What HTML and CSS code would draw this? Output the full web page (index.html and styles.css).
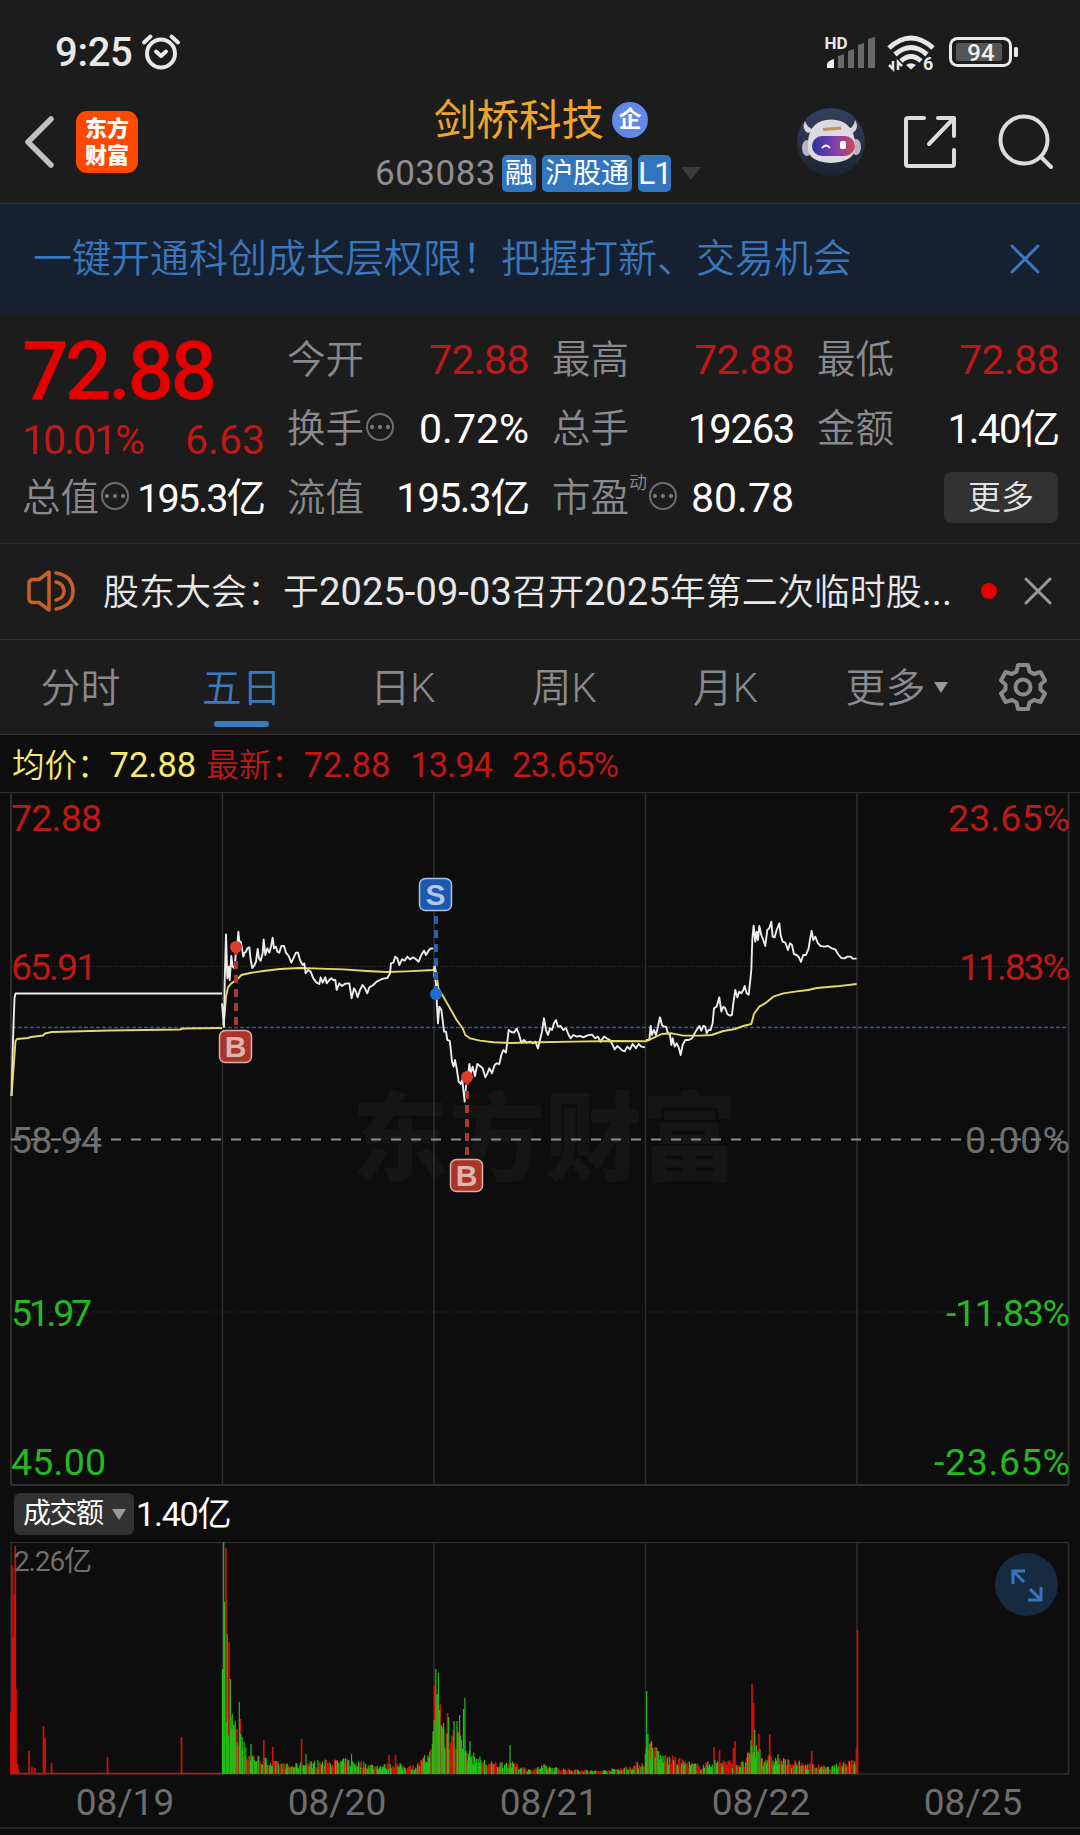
FILE: index.html
```
<!DOCTYPE html>
<html lang="zh-CN">
<head>
  <meta charset="UTF-8">
  <meta name="viewport" content="width=device-width, initial-scale=1.0">
  <title>剑桥科技 603083</title>
  <link rel="stylesheet" href="styles.css">
</head>
<body>
  <!-- 状态栏 -->
  <div class="status-bar">
    <span class="time">9:25</span>
    <svg class="alarm" width="40" height="38" viewBox="0 0 40 38" fill="none" stroke="#e8e8e8" stroke-linecap="round">
      <circle cx="20" cy="20.500" r="14" stroke-width="4"/>
      <path d="M3 9.500 9.500 3.500M37 9.500 30.500 3.500" stroke-width="4"/>
      <path d="M15 18.500 20 23 25 18.500" stroke-width="4" stroke-linejoin="round"/>
    </svg>
    <svg class="status-icons" width="200" height="44" viewBox="820 30 200 44">
      <text x="824.500" y="49" class="hd">HD</text>
      <path d="M827 68v-4q1-3 7-5v9z" fill="#f0f0f0"/>
      <path d="M838 68V56l6-2v14zM848 68V51l6-2v19zM858 68V45l6-2v25zM868 68V39l7-2v31z" fill="#6a6a6a"/>
      <g fill="none" stroke="#e8e8e8" stroke-width="5">
        <path d="M889 48q22-20 44 0"/>
        <path d="M895 54.500q16-14 32 0"/>
        <path d="M901 61q10-9 20 0"/>
      </g>
      <path d="M906 65q5-3.500 10 0l-5 4.500z" fill="#e8e8e8"/>
      <path d="M893 61v8l-4-4M898 70v-8l4 4" fill="none" stroke="#e8e8e8" stroke-width="2.500"/>
      <text x="923" y="70" class="wifi-gen">6</text>
      <rect x="950.500" y="38.500" width="60" height="27" rx="7" fill="none" stroke="#e8e8e8" stroke-width="3"/>
      <rect x="956" y="43" width="46" height="18" rx="2" fill="#555"/>
      <rect x="1014" y="47" width="4" height="10" rx="1.500" fill="#e8e8e8"/>
      <text x="981" y="61" class="battery">94</text>
    </svg>
  </div>

  <!-- 标题栏 -->
  <header class="header">
    <svg class="back" width="32" height="54" viewBox="0 0 32 54" fill="none" stroke="#c0c0c0" stroke-width="5.500" stroke-linecap="round" stroke-linejoin="round">
      <path d="M27 4 4 27 27 50"/>
    </svg>
    <div class="logo">东方<br>财富</div>
    <div class="stock">
      <div class="stock-name">剑桥科技<span class="corp">企</span></div>
      <div class="stock-code">
        <span>603083</span>
        <b class="tag">融</b><b class="tag">沪股通</b><b class="tag tag-l1">L1</b>
        <i class="arrow-down"></i>
      </div>
    </div>
    <svg class="robot" width="68" height="68" viewBox="0 0 68 68">
      <defs>
        <linearGradient id="visor" x1="0" x2="1">
          <stop offset="0" stop-color="#2b3596"/>
          <stop offset=".5" stop-color="#7a3fae"/>
          <stop offset="1" stop-color="#d04a58"/>
        </linearGradient>
        <linearGradient id="night" x1="0" y1="0" x2="0" y2="1">
          <stop offset="0" stop-color="#33405f"/>
          <stop offset="1" stop-color="#1c2330"/>
        </linearGradient>
      </defs>
      <circle cx="34" cy="34" r="34" fill="url(#night)"/>
      <path d="M8 13q-4 8 3 12l7-3q-8-2-10-9zM58 12q5 8-2 13l-7-3q8-2 9-10z" fill="#d9d5dc"/>
      <ellipse cx="10" cy="40" rx="5" ry="8" fill="#b9b4c3"/>
      <ellipse cx="59" cy="39" rx="5" ry="8" fill="#b9b4c3"/>
      <path d="M11 33Q13 12 34 11.500 55 12 58 33v8q-2 13-24 14-22-1-23-14z" fill="#dcd9df"/>
      <path d="M26 21.500 44 20" stroke="#c98c61" stroke-width="3"/>
      <rect x="15" y="28" width="43" height="20" rx="10" fill="url(#visor)"/>
      <path d="M25 40q4-5 8 0" fill="none" stroke="#fff" stroke-width="2"/>
      <rect x="43" y="33" width="6" height="8" rx="2" fill="#fff"/>
    </svg>
    <svg class="share" width="56" height="56" viewBox="0 0 56 56" fill="none" stroke="#dcdcdc" stroke-width="4" stroke-linejoin="round" stroke-linecap="round">
      <path d="M22 4H6q-2 0-2 2v44q0 2 2 2h44q2 0 2-2V36M36 4h16v18M52 4 27 30"/>
    </svg>
    <svg class="search" width="56" height="56" viewBox="0 0 56 56" fill="none" stroke="#dcdcdc" stroke-width="4" stroke-linecap="round">
      <circle cx="26" cy="26" r="23.500"/>
      <path d="M43 43 53 53"/>
    </svg>
  </header>

  <!-- 广告条 -->
  <div class="banner">
    <span>一键开通科创成长层权限！把握打新、交易机会</span>
    <svg width="30" height="30" viewBox="0 0 30 30" stroke="#3b7ac2" stroke-width="3" stroke-linecap="round">
      <path d="M2 2 28 28M28 2 2 28"/>
    </svg>
  </div>

  <!-- 行情 -->
  <section class="quote">
    <div class="quote-col">
      <div class="price">72.88</div>
      <div class="change"><span class="pct">10.01%</span><span>6.63</span></div>
      <div class="item"><label>总值</label><i class="info"></i><span class="val tighter">195.3亿</span></div>
    </div>
    <div class="quote-col">
      <div class="item"><label>今开</label><span class="val up">72.88</span></div>
      <div class="item"><label>换手</label><i class="info"></i><span class="val">0.72%</span></div>
      <div class="item"><label>流值</label><span class="val tight">195.3亿</span></div>
    </div>
    <div class="quote-col">
      <div class="item"><label>最高</label><span class="val up">72.88</span></div>
      <div class="item"><label>总手</label><span class="val tight">19263</span></div>
      <div class="item"><label>市盈<sup>动</sup></label><i class="info"></i><span class="val">80.78</span></div>
    </div>
    <div class="quote-col">
      <div class="item"><label>最低</label><span class="val up">72.88</span></div>
      <div class="item"><label>金额</label><span class="val tight">1.40亿</span></div>
      <div class="item"><button class="more-btn">更多</button></div>
    </div>
  </section>

  <!-- 公告 -->
  <div class="notice">
    <svg class="speaker" width="48" height="42" viewBox="0 0 48 42" fill="none" stroke="#c95f27" stroke-width="3.500" stroke-linejoin="round" stroke-linecap="round">
      <path d="M22 2v38l-10-7.500H5q-3-1-3-4v-15q0-3 3-4h7z"/>
      <path d="M29 12q8 2 8 9t-8 9M29 3q17 3 17 18T29 39"/>
    </svg>
    <span class="notice-text">股东大会：于<em>2025-09-03</em>召开<em>2025</em>年第二次临时股<em>...</em></span>
    <i class="dot"></i>
    <svg class="close" width="28" height="28" viewBox="0 0 28 28" stroke="#9a9a9a" stroke-width="3" stroke-linecap="round">
      <path d="M2 2 26 26M26 2 2 26"/>
    </svg>
  </div>

  <!-- 周期切换 -->
  <nav class="tabs">
    <a>分时</a>
    <a class="active">五日</a>
    <a>日K</a>
    <a>周K</a>
    <a>月K</a>
    <a class="tab-more">更多<i></i></a>
    <svg class="gear" width="50" height="50" viewBox="-25 -25 50 50" fill="none" stroke="#8a8a8e" stroke-width="4" stroke-linejoin="round">
      <path d="M-5-22H5L6.500-15.500 11-13 17.500-15 22-6.500 17.500-2.500V2.500L22 6.500 17.500 15 11 13 6.500 15.500 5 22H-5L-6.500 15.500-11 13-17.500 15-22 6.500-17.500 2.500V-2.500L-22-6.500-17.500-15-11-13-6.500-15.500Z"/>
      <circle r="7.500"/>
    </svg>
  </nav>

  <div class="legend">
    <span class="avg">均价：<em>72.88</em></span>
    <span class="last">最新：<em>72.88</em><em>13.94</em><em>23.65%</em></span>
  </div>

  <!-- 五日分时图 -->
  <svg class="chart" width="1080" height="694" viewBox="0 792 1080 694">
    <text x="352" y="1173" class="watermark">东方财富</text>
    <g stroke="#2e2e2e" stroke-width="2">
      <path d="M0 792.500H1080" stroke-width="1.500"/>
      <path d="M11 793V1485M1068.500 793V1485M10 1485H1069"/>
      <path d="M222.500 793V1485M434 793V1485M645.500 793V1485M857 793V1485" stroke-width="1.500"/>
    </g>
    <path d="M12 966.500H1068M12 1312H1068" stroke="#333" stroke-dasharray="1 2"/>
    <path d="M11 1139.500H1068" stroke="#8e8e8e" stroke-width="2" stroke-dasharray="10 10"/>
    <path d="M12 1027.500H1068" stroke="#33588a" stroke-width="1.500" stroke-dasharray="4 2"/>

    <g class="axis">
      <text x="11" y="831" textLength="91" class="r">72.88</text>
      <text x="11" y="980" textLength="86" class="r">65.91</text>
      <text x="11" y="1153" textLength="91">58.94</text>
      <text x="11" y="1326" textLength="81" class="g">51.97</text>
      <text x="11" y="1475" textLength="95" class="g">45.00</text>
    </g>
    <g class="axis" text-anchor="end">
      <text x="1070" y="831" textLength="122" class="r">23.65%</text>
      <text x="1070" y="980" textLength="111" class="r">11.83%</text>
      <text x="1070" y="1153" textLength="105">0.00%</text>
      <text x="1070" y="1326" textLength="124" class="g">-11.83%</text>
      <text x="1070" y="1475" textLength="136" class="g">-23.65%</text>
    </g>

    <!-- 08/19 -->
    <path class="line-price" d="M11.500 1096 13 1040 14.500 998 15.500 993.500H222"/>
    <path class="line-avg" d="M11.500 1096 14 1062 15.500 1041 17 1039 28 1038 31 1037 43 1035.500 45 1033.500 52 1032 110 1030.500 180 1029.500 183 1028.500 222 1028"/>
    <!-- 08/20 -->
    <g transform="translate(200 900) scale(.3333)">
      <polyline class="line-avg" points="70,375 74,340 78,290 84,262 92,252 104,243 112,238 124,225 150,219 190,213 240,207 300,204 360,206 430,208 500,213 560,216 620,214 700,210 705,195"/>
      <polyline class="line-price" points="66,310 72,380 74,250 78,103 82,235 86,200 89,240 94,168 98,200 104,205 108,150 112,140 115,95 118,125 122,125 126,145 130,170 134,158 138,155 142,145 148,142 152,180 157,204 162,198 168,185 173,147 177,175 182,182 188,160 191,118 196,165 202,145 208,158 213,140 218,113 222,145 228,140 232,155 238,158 244,138 252,138 258,158 266,168 274,188 280,175 288,158 294,158 300,180 308,195 313,190 317,220 324,210 332,215 340,235 350,248 358,252 362,232 368,248 376,232 380,250 388,240 394,235 400,240 406,240 410,270 418,250 426,258 434,252 442,250 448,250 455,295 462,265 468,275 473,292 480,270 488,255 495,265 502,280 508,262 520,255 530,245 540,240 550,236 562,234 570,220 573,190 580,188 586,170 592,175 598,195 606,178 614,182 622,170 630,178 640,172 648,178 656,185 664,165 672,152 678,165 684,155 690,146 700,145"/>
    </g>
    <!-- 08/21, 08/22 -->
    <g transform="translate(400 860) scale(.3333)">
      <polyline class="line-price" points="105,315 103,345 108,370 111,440 114,490 118,440 124,450 128,480 132,515 138,515 142,540 149,543 152,565 156,605 161,620 165,600 170,625 176,665 182,672 187,660 190,690 194,725 198,680 201,655 205,640 208,612 212,640 218,620 225,648 232,612 240,618 248,625 256,652 262,640 268,625 276,640 284,615 290,610 298,612 304,585 310,570 318,578 322,545 326,510 334,516 342,518 350,506 356,520 364,548 372,540 380,548 390,545 400,550 406,545 414,565 420,540 426,515 432,475 438,510 444,525 450,505 456,510 462,490 468,480 474,500 482,498 490,510 498,505 506,525 512,535 520,525 530,530 540,528 550,532 562,526 576,524 586,535 594,530 602,545 612,530 620,535 630,540 638,555 644,568 652,558 660,565 668,572 674,574 682,560 690,568 698,552 708,565 716,552 724,560 735,562"/>
      <polyline class="line-price" points="738,540 748,540 752,498 756,525 762,510 768,525 774,500 780,472 786,495 792,500 798,500 804,520 810,525 814,555 818,535 824,560 830,550 836,562 842,585 848,555 856,540 866,540 876,535 884,520 890,510 898,498 904,512 910,498 916,500 920,520 926,510 932,510 938,490 942,445 950,440 958,412 964,455 970,440 976,445 982,462 990,467 996,465 1000,430 1006,390 1012,412 1018,395 1024,400 1030,390 1034,378 1040,400 1046,404 1050,370 1054,330 1057,240 1061,197 1066,245 1070,215 1074,240 1078,198 1084,225 1090,240 1096,258 1102,210 1108,205 1114,185 1118,230 1124,232 1130,210 1138,190 1142,225 1148,245 1156,248 1164,270 1170,250 1176,255 1182,282 1190,285 1196,290 1203,306 1210,285 1218,285 1226,265 1230,240 1235,212 1240,240 1246,230 1254,250 1262,258 1272,260 1284,258 1296,265 1306,268 1314,282 1324,294 1334,295 1342,290 1352,290 1358,296 1370,296"/>
      <polyline class="line-avg" points="106,325 110,345 115,385 130,410 150,445 170,480 188,505 196,525 210,535 240,542 280,547 330,549 420,547 520,545 640,543 738,544"/>
      <polyline class="line-avg" points="738,544 760,534 785,522 815,520 850,527 900,527 935,525 970,513 1005,507 1030,498 1054,492 1062,462 1078,440 1100,427 1120,410 1150,400 1190,394 1225,390 1250,384 1310,379 1370,372"/>
    </g>

    <!-- 买卖点 -->
    <g class="mark buy">
      <path d="M236 1025V950"/>
      <circle cx="236" cy="947" r="6"/>
      <rect x="219.500" y="1030.500" width="32" height="32" rx="6"/>
      <text x="235.500" y="1057">B</text>
    </g>
    <g class="mark buy">
      <path d="M467 1155V1079"/>
      <circle cx="467" cy="1077" r="6"/>
      <rect x="450.500" y="1159.500" width="32" height="32" rx="6"/>
      <text x="466.500" y="1186">B</text>
    </g>
    <g class="mark sell">
      <path d="M436 916V992"/>
      <circle cx="436" cy="994" r="6"/>
      <rect x="419.500" y="878.500" width="32" height="32" rx="6"/>
      <text x="435.500" y="905">S</text>
    </g>
  </svg>

  <div class="vol-head">
    <button class="vol-btn">成交额<i></i></button>
    <span>1.40亿</span>
  </div>

  <!-- 成交额 -->
  <svg class="volume" width="1080" height="233" viewBox="0 1542 1080 233">
    <path d="M10 1542.500H1069M11 1543V1774M1068.500 1543V1774M10 1774H1069M222.500 1543V1774M434 1543V1774M645.500 1543V1774M857 1543V1774" stroke="#2e2e2e" stroke-width="1.500"/>
    <path id="bars-red" stroke="#d20f0a" stroke-width="1.700"/>
    <path id="bars-green" stroke="#22bd18" stroke-width="1.200"/>
    <text x="14" y="1571" textLength="78" class="vol-max">2.26亿</text>
    <circle cx="1026.500" cy="1584.500" r="31.500" fill="#172a40"/>
    <path d="M1013 1584V1571H1025M1013 1571 1024 1582M1041 1587V1600H1028M1041 1600 1030 1589" fill="none" stroke="#3776be" stroke-width="3"/>
  </svg>

  <div class="dates">
    <span>08/19</span><span>08/20</span><span>08/21</span><span>08/22</span><span>08/25</span>
  </div>

  <script>
    const BASE = 1774;
    const red = [], green = [];

    function bar(list, x, h) {
      list.push('M' + x.toFixed(1) + ' ' + BASE + 'v-' + h.toFixed(1));
    }

    // 单独的高柱: [x, 高度, 颜色]
    const spikes = [
      [11, 62, 'r'], [12, 209, 'r'], [13, 136, 'r'], [14.2, 179, 'r'], [15.3, 228, 'r'], [16, 85, 'r'], [17.5, 10, 'r'], [18.5, 5, 'r'],
      [29, 23, 'r'], [32, 7, 'r'], [35, 6, 'r'], [43.5, 48, 'r'], [45, 36, 'r'], [51.5, 11, 'r'], [107.5, 17, 'r'], [181.5, 37, 'r'],
      [222.5, 105, 'g'], [223.7, 232, 'g'], [224.7, 172, 'g'], [226, 226, 'r'], [227.2, 140, 'g'], [229, 132, 'r'], [230.3, 95, 'g'],
      [232.3, 60, 'g'], [235, 50, 'g'], [237, 45, 'r'], [239.3, 72, 'g'], [240.5, 55, 'r'], [242.2, 37, 'g'], [244.2, 32, 'g'],
      [251, 30, 'g'], [263.8, 34, 'r'], [272.8, 27, 'r'], [301.6, 35, 'r'], [306, 20, 'g'], [351.5, 20, 'g'], [389, 19, 'r'], [395.5, 19, 'r'],
      [431, 25, 'r'], [433, 42, 'g'], [434.5, 88, 'r'], [435.8, 105, 'g'], [438.5, 101, 'g'], [437.2, 80, 'g'], [440.3, 70, 'r'], [443.5, 51, 'g'],
      [447.5, 61, 'r'], [448.7, 57, 'g'], [454, 53, 'g'], [457, 53, 'g'], [459.6, 59, 'g'], [463.5, 65, 'g'], [464.9, 76, 'g'],
      [470, 33, 'g'], [510, 29, 'g'],
      [646.7, 83, 'g'], [648, 40, 'g'], [650, 31, 'r'], [651.5, 33, 'g'], [656, 27, 'g'],
      [714, 27, 'r'], [719.5, 24, 'r'], [735, 33, 'r'], [733.5, 26, 'r'], [752, 90, 'r'], [753.6, 71, 'r'], [754.7, 44, 'g'],
      [756.5, 29, 'g'], [759, 40, 'r'], [760, 25, 'g'], [769.7, 40, 'r'], [778, 20, 'g'], [811.7, 23, 'r'], [856.5, 25, 'r'], [857.5, 144, 'r']
    ];

    // 普通柱的包络线: [x, 平均高度]
    const envelope = [
      [223, 60], [230, 55], [240, 36], [246, 22], [258, 16], [275, 11], [290, 8], [310, 11], [350, 13], [375, 8], [395, 9], [415, 7],
      [432, 22], [436, 70], [445, 42], [462, 36], [468, 20], [490, 10], [510, 11], [530, 4], [545, 8], [560, 5], [600, 3], [630, 7],
      [644, 12], [648, 32], [660, 18], [680, 13], [700, 8], [718, 13], [745, 10], [752, 30], [762, 17], [790, 12], [830, 6], [857, 16]
    ];

    let seed = 7;
    function rnd() {
      seed = (seed * 16807) % 2147483647;
      return seed / 2147483647;
    }

    let k = 0;
    for (let x = 223; x < 857; x += 0.88) {
      while (k < envelope.length - 2 && envelope[k + 1][0] < x) k++;
      const [x0, h0] = envelope[k], [x1, h1] = envelope[k + 1];
      const h = h0 + (h1 - h0) * (x - x0) / (x1 - x0);
      bar(rnd() > 0.54 ? green : red, x, h * (0.5 + rnd() * 0.75));
    }
    spikes.forEach(([x, h, c]) => bar(c === 'r' ? red : green, x, h));
    red.push('M10 1773.5H222');

    document.getElementById('bars-red').setAttribute('d', red.join(''));
    document.getElementById('bars-green').setAttribute('d', green.join(''));
  </script>
</body>
</html>
```
FILE: styles.css
```
* {
  box-sizing: border-box;
}
body {
  margin: 0;
  width: 1080px;
  height: 1835px;
  overflow: hidden;
  background: #1c1c1c;
  color: #fff;
  font-family: Roboto, "Noto Sans CJK SC", sans-serif;
  font-weight: 350;
  line-height: 1.2;
}
svg {
  display: block;
  flex: none;
}
i, em {
  font-style: normal;
}
button {
  border: none;
  padding: 0;
  color: #e4e4e4;
  font: inherit;
}

/* 状态栏 */
.status-bar {
  display: flex;
  align-items: flex-start;
  height: 96px;
  padding: 30px 60px 0 55px;
}
.time {
  width: 78px;
  font-size: 40px;
  line-height: 46px;
  font-weight: 500;
  letter-spacing: -.3px;
  color: #e8e8e8;
}
.alarm {
  margin-left: 8px;
  margin-top: 3px;
}
.status-icons {
  margin-left: auto;
}
.hd {
  font-size: 17px;
  font-weight: 700;
  fill: #e8e8e8;
}
.wifi-gen {
  font-size: 18px;
  font-weight: 700;
  fill: #e8e8e8;
}
.battery {
  font-size: 24px;
  font-weight: 500;
  text-anchor: middle;
  fill: #f0f0f0;
}

/* 标题栏 */
.header {
  display: flex;
  align-items: center;
  height: 108px;
  padding: 0 26px 16px 24px;
  border-bottom: 1px solid #333;
}
.logo {
  width: 62px;
  height: 62px;
  margin-left: 20px;
  padding-top: 4px;
  border-radius: 11px;
  background: #ff4800;
  font-size: 22px;
  line-height: 27px;
  font-weight: 900;
  text-align: center;
}
.stock {
  width: 330px;
  margin-left: 238px;
  padding-top: 6px;
}
.stock-name {
  display: flex;
  align-items: center;
  height: 46px;
  padding-left: 58px;
  font-size: 42.500px;
  font-weight: 400;
  color: #eda62b;
}
.corp {
  width: 36px;
  height: 36px;
  margin-left: 8px;
  border-radius: 50%;
  background: #6289e6;
  color: #fff;
  font-size: 23px;
  line-height: 36px;
  font-weight: 700;
  text-align: center;
}
.stock-code {
  display: flex;
  align-items: center;
  height: 37px;
  margin-top: 12px;
  font-size: 35px;
  color: #8e8e93;
}
.stock-code span {
  width: 127px;
  margin-left: -1px;
  font-weight: 400;
  letter-spacing: .5px;
}
.tag {
  height: 37px;
  padding: 0 3px;
  margin-right: 6px;
  border-radius: 5px;
  background: #3174bf;
  color: #fff;
  font-size: 28px;
  line-height: 37px;
  font-weight: 400;
}
.tag-l1 {
  font-size: 32px;
  padding: 0;
  width: 33px;
  letter-spacing: -1px;
  text-align: center;
}
.arrow-down {
  border: 10px solid transparent;
  border-top: 13px solid #3a3a3a;
  border-bottom: 0;
  margin-left: 4px;
}
.robot {
  margin-left: auto;
}
.share {
  margin-left: 37px;
}
.search {
  margin-left: 40px;
}

/* 广告条 */
.banner {
  display: flex;
  align-items: center;
  justify-content: space-between;
  height: 110px;
  padding: 0 40px 0 33px;
  background: #152130;
  color: #3b76bb;
  font-size: 39px;
}

/* 行情 */
.quote {
  display: grid;
  grid-template-columns: repeat(4, minmax(0, 1fr));
  column-gap: 25px;
  height: 230px;
  padding: 12px 23px 0 22px;
  border-bottom: 1px solid #2a2a2a;
}
.item {
  display: flex;
  align-items: center;
  height: 69px;
  font-size: 41px;
  white-space: nowrap;
}
.item label {
  color: #8a8a8e;
  font-size: 38.500px;
}
.item sup {
  font-size: 18px;
  line-height: 0;
  vertical-align: 22px;
}
.val {
  margin-left: auto;
  margin-right: -2px;
  font-weight: 400;
}
.tight {
  font-size: 40px;
  letter-spacing: -1.300px;
}
.tighter {
  font-size: 39.500px;
  letter-spacing: -2px;
}
.up,
.change {
  color: #bf1815;
}
.up {
  letter-spacing: -.6px;
}
.info {
  width: 28px;
  height: 28px;
  margin: 0 0 5px 2px;
  border: 2px solid #6e6e6e;
  border-radius: 50%;
  background: radial-gradient(circle, #777 1.800px, transparent 2.300px) center / 8px 24px;
}
.price {
  height: 91px;
  font-size: 82px;
  line-height: 90px;
  font-weight: 500;
  color: #e60000;
  letter-spacing: -3.500px;
}
.change {
  display: flex;
  justify-content: space-between;
  height: 47px;
  margin-right: -3px;
  font-size: 41px;
  line-height: 46px;
  font-weight: 400;
}
.pct {
  letter-spacing: -2px;
}
.more-btn {
  width: 114px;
  height: 51px;
  margin: 0 -1px 2px auto;
  border-radius: 7px;
  background: #313131;
  font-size: 33px;
}

/* 公告 */
.notice {
  display: flex;
  align-items: center;
  height: 96px;
  padding: 0 28px 2px 27px;
  border-bottom: 1px solid #333;
}
.notice-text {
  width: 852px;
  margin-left: 28px;
  padding-top: 5px;
  font-size: 36px;
  color: #e8e8e8;
  white-space: nowrap;
}
.notice-text em {
  font-size: 38px;
  font-weight: 400;
  letter-spacing: .1px;
}
.dot {
  width: 16px;
  height: 16px;
  margin-left: 26px;
  border-radius: 50%;
  background: #e80000;
}
.close {
  margin-left: auto;
}

/* 周期切换 */
.tabs {
  display: flex;
  height: 95px;
  border-bottom: 1px solid #333;
}
.tabs a {
  display: flex;
  flex-direction: column;
  align-items: center;
  width: 161.200px;
  padding-top: 18px;
  font-size: 40px;
  line-height: 62px;
  color: #8a8a8e;
}
.tabs .active {
  color: #3d79bf;
}
.active::after {
  content: "";
  width: 55px;
  height: 6px;
  margin-top: 1px;
  border-radius: 3px;
  background: #3d79bf;
}
.tabs .tab-more {
  flex-direction: row;
  align-items: flex-start;
  justify-content: center;
  margin-left: 10px;
}
.tab-more i {
  border: 7px solid transparent;
  border-top: 11px solid #9a9a9e;
  border-bottom: 0;
  margin: 24px 0 0 8px;
}
.gear {
  margin: 22px 0 0 21px;
}

.legend {
  display: flex;
  gap: 10px;
  height: 57px;
  padding-left: 12px;
  background: #0d0d0d;
  font-size: 32.500px;
  line-height: 61px;
}
.legend em {
  font-size: 34.500px;
  font-weight: 400;
}
.last em + em {
  margin-left: 20px;
  letter-spacing: -1px;
}
.avg {
  color: #f5ea78;
}
.last {
  color: #bf1815;
}

/* 图表 */
.chart,
.volume {
  background: #0d0d0d;
}
.watermark {
  font-size: 96.500px;
  font-weight: 900;
  fill: #151515;
}
.axis {
  font-size: 37.500px;
  font-weight: 400;
  fill: #6e6e6e;
}
.r {
  fill: #bf1815;
}
.g {
  fill: #26b822;
}
.line-price,
.line-avg {
  fill: none;
  stroke: #ececec;
  stroke-width: 1.900px;
  stroke-linejoin: round;
  vector-effect: non-scaling-stroke;
}
.line-avg {
  stroke: #e6db67;
}
.mark path {
  stroke-width: 4px;
  stroke-dasharray: 8 6;
}
.mark rect {
  stroke-width: 1.500px;
}
.mark text {
  font-family: "Liberation Sans", sans-serif;
  font-size: 30px;
  font-weight: 700;
  text-anchor: middle;
}
.buy path {
  stroke: #a83a2e;
}
.buy circle {
  fill: #e03c28;
}
.buy rect {
  fill: #ab3429;
  stroke: #d9b0aa;
}
.buy text {
  fill: #dcb5b0;
}
.sell path {
  stroke: #2c62ab;
}
.sell circle {
  fill: #1f6bd6;
}
.sell rect {
  fill: #1d58ae;
  stroke: #a9c0e0;
}
.sell text {
  fill: #b3c6e2;
}

.vol-head {
  display: flex;
  align-items: center;
  height: 56px;
  padding-left: 14px;
  background: #0d0d0d;
  font-size: 34px;
  font-weight: 400;
  letter-spacing: -1.200px;
}
.vol-btn {
  display: flex;
  align-items: center;
  width: 120px;
  height: 42px;
  margin-right: 2px;
  padding-left: 9px;
  border-radius: 6px;
  background: #323232;
  color: #fff;
  font-size: 28px;
  letter-spacing: -1.500px;
}
.vol-btn i {
  border: 7px solid transparent;
  border-top: 11px solid #9a9a9e;
  border-bottom: 0;
  margin-left: 9px;
}
.vol-max {
  font-size: 28px;
  font-weight: 400;
  fill: #6e6e6e;
}
.dates {
  display: flex;
  height: 60px;
  padding-left: 19px;
  background: #0d0d0d;
  border-bottom: 6px solid #0d0d0d;
  box-shadow: inset 0 -2px #262626;
}
.dates span {
  width: 212px;
  font-size: 37px;
  font-weight: 400;
  line-height: 55px;
  text-align: center;
  color: #6e6e6e;
}
```
